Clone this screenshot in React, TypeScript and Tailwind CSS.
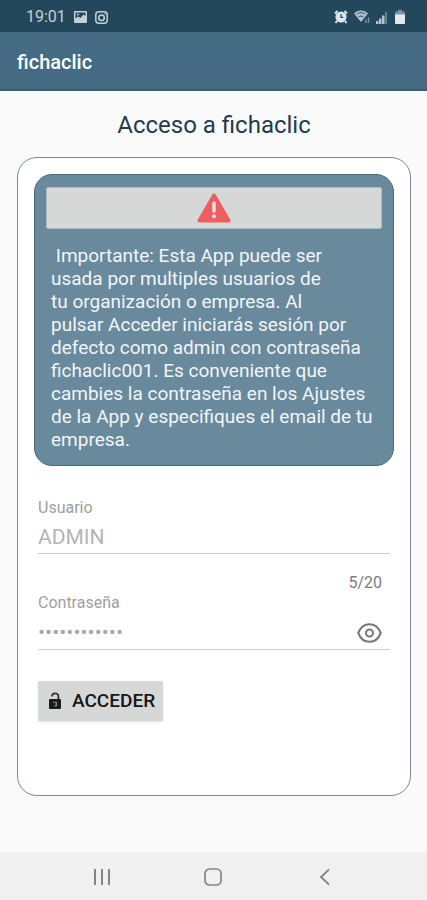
import { useState } from 'react'

const NOTICE_LINES = [
  '\u00a0Importante: Esta App puede ser',
  'usada por multiples usuarios de',
  'tu organización o empresa. Al',
  'pulsar Acceder iniciarás sesión por',
  'defecto como admin con contraseña',
  'fichaclic001. Es conveniente que',
  'cambies la contraseña en los Ajustes',
  'de la App y especifiques el email de tu',
  'empresa.',
]

const MAX_USER_LENGTH = 20

function StatusBar() {
  return (
    <div className="flex h-8 items-center justify-between bg-[#23485b] pt-0.5 pr-[22px] pl-[26px] text-[#c3d0d8]">
      <div className="flex items-center gap-2">
        <span className="text-base leading-5">19:01</span>
        {/* Gallery */}
        <svg width="13" height="12" viewBox="0 0 13 12">
          <path fill="currentColor" fillRule="evenodd" d="M1 0h11a1 1 0 0 1 1 1v10a1 1 0 0 1-1 1H1a1 1 0 0 1-1-1V1a1 1 0 0 1 1-1ZM1.5 1.5v6l2.5-2 2.5 1.5 3-3.5 2 1.5V1.5Z" />
          <circle cx="4" cy="3.4" r="1" fill="currentColor" />
        </svg>
        {/* Camera */}
        <svg width="13" height="13" viewBox="0 0 13 13" fill="none" stroke="currentColor" strokeWidth="1.5">
          <rect x="0.8" y="0.8" width="11.4" height="11.4" rx="3" />
          <circle cx="6.5" cy="6.8" r="2.8" />
          <path d="M9.5 3h1" />
        </svg>
      </div>
      <div className="flex items-center gap-1.5">
        {/* Alarm */}
        <svg width="14" height="14" viewBox="0 0 14 14">
          <path d="M1 3.5 3.5 1M13 3.5 10.5 1M3 11l-1.5 2M11 11l1.5 2" stroke="#dce5e8" strokeWidth="2" />
          <circle cx="7" cy="7" r="5.6" fill="#dce5e8" />
          <path d="M7 4v3.3h2.2" fill="none" stroke="#23485b" strokeWidth="1.2" />
        </svg>
        {/* Wifi */}
        <svg width="16" height="14" viewBox="0 0 16 14">
          <path d="M0 3.5C4-.6 10-.6 14 3.5L7 12Z" fill="#b3c3cd" />
          <path d="M2.500 4.300C5 2.200 9 2.200 11.500 4.300M4.500 7C6 5.800 8 5.800 9.500 7" fill="none" stroke="#23485b" strokeWidth="1" />
          <path d="M11.800 13V9.500M14.500 13V7.500" stroke="#7b95a5" strokeWidth="1.400" />
        </svg>
        {/* Signal */}
        <svg width="12" height="13" viewBox="0 0 12 13">
          <path fill="#b3c3cd" d="M0 10h2.500v3H0zM3 7.500h2.500V13H3zM6 4.500h2.500V13H6z" />
          <path fill="#64808f" d="M9 1h2v12H9z" />
        </svg>
        {/* Battery */}
        <svg className="ml-px" width="10" height="14" viewBox="0 0 10 14">
          <path fill="#7e969f" d="M3 0h4v1.500h2a1 1 0 0 1 1 1V5H0V2.500a1 1 0 0 1 1-1h2z" />
          <path fill="#e4ebed" d="M0 4.500h10V13a1 1 0 0 1-1 1H1a1 1 0 0 1-1-1z" />
        </svg>
      </div>
    </div>
  )
}

function Notice() {
  return (
    <div className="rounded-[18px] border border-[#45677b] bg-[#69899d] px-[11px] pt-3 pb-3.5">
      <button type="button" aria-label="Aviso" className="flex h-[42px] w-full items-center justify-center rounded-xs border border-[#aebbc2] bg-[#d6d8d7]">
        <svg width="34" height="30" viewBox="0 0 34 30">
          <path d="M17 2.500 31.500 27.500h-29Z" fill="#ec5f60" stroke="#ec5f60" strokeWidth="4" strokeLinejoin="round" />
          <path d="M17 10v8" stroke="#e8dcdb" strokeWidth="3.500" strokeLinecap="round" />
          <circle cx="17" cy="23.300" r="2" fill="#e8dcdb" />
        </svg>
      </button>
      <p className="px-[5px] pt-[15px] text-[19px] leading-[23px] whitespace-nowrap text-[#f2f6f8]">
        {NOTICE_LINES.map((line) => (
          <span key={line} className="block">{line}</span>
        ))}
      </p>
    </div>
  )
}

function LoginForm() {
  const [user, setUser] = useState('ADMIN')
  const [password, setPassword] = useState('fichaclic001')
  const [visible, setVisible] = useState(false)

  return (
    <form className="px-1 pt-8" onSubmit={(e) => e.preventDefault()}>
      <label htmlFor="user" className="block text-base leading-5 text-[#a0a0a0]">Usuario</label>
      <div className="flex h-9 items-center border-b border-[#cbcbcb] pt-1">
        <input
          id="user"
          value={user}
          maxLength={MAX_USER_LENGTH}
          onChange={(e) => setUser(e.target.value)}
          className="w-full bg-transparent text-[21px] text-[#b4b4b4] outline-none"
        />
      </div>
      <div className="pt-[19px] pr-2 text-right text-base leading-5 text-[#7d7d7d]">
        {user.length}/{MAX_USER_LENGTH}
      </div>

      <label htmlFor="password" className="block text-base leading-5 text-[#a0a0a0]">Contraseña</label>
      <div className="flex h-[37px] items-center border-b border-[#d2d2d2] pt-1 pr-2">
        <input
          id="password"
          type={visible ? 'text' : 'password'}
          value={password}
          onChange={(e) => setPassword(e.target.value)}
          className="min-w-0 flex-1 bg-transparent text-[21px] text-[#a8a8a8] outline-none"
        />
        <button type="button" aria-label="Mostrar contraseña" onClick={() => setVisible(!visible)}>
          <svg width="25" height="20" viewBox="0 0 25 20" fill="none" stroke="#777" strokeWidth="2">
            <path d="M1.200 10C3.500 4.400 7.600 1.200 12.500 1.200S21.500 4.400 23.800 10C21.500 15.600 17.400 18.800 12.500 18.800S3.500 15.600 1.200 10Z" strokeLinejoin="round" />
            <circle cx="12.500" cy="10" r="3.500" />
          </svg>
        </button>
      </div>

      <button type="submit" className="mt-[31px] flex h-10 items-center gap-2.5 rounded-xs bg-[#d6d8d7] pr-2 pl-2.5 text-[#161616] shadow-sm">
        <svg width="14" height="18" viewBox="0 0 14 18">
          <path d="M4 4.500a3.200 3.200 0 0 1 6.400 0V8" fill="none" stroke="#333" strokeWidth="1.800" />
          <rect x="1" y="7" width="12" height="10" rx="1" fill="#1b1b1b" />
          <path d="M5 10.200h3.500v1.800H7M8.500 12v2H6" fill="none" stroke="#8c8f8e" strokeWidth="1" />
        </svg>
        <span className="text-[19px] font-medium">ACCEDER</span>
      </button>
    </form>
  )
}

function NavigationBar() {
  return (
    <nav className="flex h-[49px] items-center justify-around bg-[#f0f0f0] px-[46px] text-[#858585]">
      <button type="button" aria-label="Recientes">
        <svg width="18" height="18" viewBox="0 0 18 18" stroke="currentColor" strokeWidth="2">
          <path d="M2 1v16M9 1v16M16 1v16" />
        </svg>
      </button>
      <button type="button" aria-label="Inicio">
        <svg width="18" height="18" viewBox="0 0 18 18" fill="none" stroke="currentColor" strokeWidth="1.700">
          <rect x="1" y="1" width="16" height="16" rx="4.500" />
        </svg>
      </button>
      <button type="button" aria-label="Atrás">
        <svg width="18" height="18" viewBox="0 0 18 18" fill="none" stroke="currentColor" strokeWidth="1.800">
          <path d="M13 1.500 5 9l8 7.500" />
        </svg>
      </button>
    </nav>
  )
}

export default function App() {
  return (
    <div className="flex min-h-screen flex-col bg-[#fafafa] font-[Roboto,sans-serif]">
      <StatusBar />
      <header className="flex h-[59px] items-center border-b-2 border-[#2f607e] bg-[#456b84] px-[17px] pt-0.5">
        <h1 className="text-xl font-medium text-white">fichaclic</h1>
      </header>

      <main className="flex-1 pt-[18px] pr-4 pb-14 pl-[17px]">
        <h2 className="text-center text-2xl text-[#1f3d4d]">Acceso a fichaclic</h2>
        <section className="mt-4 rounded-[20px] border border-[#78898f] bg-white px-4 pt-4 pb-[74px]">
          <Notice />
          <LoginForm />
        </section>
      </main>

      <NavigationBar />
    </div>
  )
}
